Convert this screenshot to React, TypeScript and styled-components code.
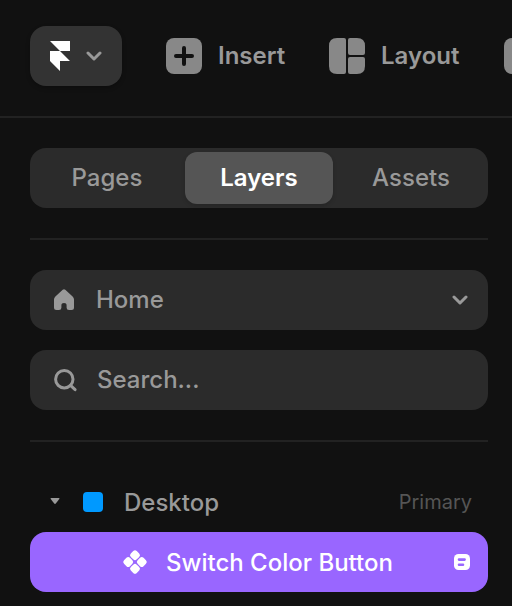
import React from "react";
import styled, { createGlobalStyle } from "styled-components";

const GlobalStyle = createGlobalStyle`
  * { box-sizing: border-box; }
  body { margin: 0; background: #111111; overflow: hidden; }
`;

const Panel = styled.div`
  width: 512px;
  height: 606px;
  overflow: hidden;
  background: #111111;
  color: #999999;
  font: 500 24px/30px Inter, sans-serif;
`;

const Toolbar = styled.header`
  display: flex;
  align-items: center;
  width: 512px;
  height: 118px;
  padding: 0 0 4px 30px;
  border-bottom: 2px solid #222222;
  overflow: hidden;
  svg { flex: none; display: block; }
`;

const MenuButton = styled.button`
  display: flex;
  align-items: center;
  flex: none;
  gap: 16px;
  width: 92px;
  height: 60px;
  margin: 0 44px 0 0;
  padding: 0 0 0 20px;
  border: 0;
  border-radius: 16px;
  background: #333333;
  box-shadow: 0 2px 4px rgba(0, 0, 0, 0.25);
`;

const Tool = styled.div<{ $width?: number }>`
  display: flex;
  align-items: center;
  flex: none;
  gap: 16px;
  width: ${(p) => p.$width ?? 36}px;
  color: #999999;
  font-weight: 600;
`;

const Label = styled.span`
  white-space: nowrap;
`;

const Sidebar = styled.main`
  width: 488px;
  padding: 30px 0 0 30px;
`;

const Tabs = styled.nav`
  display: grid;
  grid-template-columns: 146px 148px 146px;
  gap: 5px;
  height: 60px;
  padding: 4px;
  border-radius: 16px;
  background: #2b2b2b;
`;

const Tab = styled.div<{ $active?: boolean }>`
  display: flex;
  align-items: center;
  justify-content: center;
  border-radius: 12px;
  background: ${(p) => (p.$active ? "#555555" : "transparent")};
  color: ${(p) => (p.$active ? "#ffffff" : "#999999")};
  font-weight: ${(p) => (p.$active ? 600 : 500)};
  box-shadow: ${(p) => (p.$active ? "0 2px 4px rgba(0, 0, 0, 0.15)" : "none")};
`;

const Divider = styled.hr`
  height: 2px;
  margin: 30px 0;
  border: 0;
  background: #222222;
`;

const Field = styled.div<{ $gap?: number }>`
  display: flex;
  align-items: center;
  height: 60px;
  padding: 0 20px 0 22px;
  border-radius: 16px;
  background: #2b2b2b;
  & + & { margin-top: 20px; }
  svg { flex: none; }
  > span { margin-left: ${(p) => p.$gap ?? 18}px; flex: 1; }
`;

const LayerRow = styled.div<{ $selected?: boolean }>`
  display: flex;
  align-items: center;
  height: 60px;
  padding: ${(p) => (p.$selected ? "0 18px 0 92px" : "0 16px 0 20px")};
  border-radius: 16px;
  background: ${(p) => (p.$selected ? "#9966ff" : "transparent")};
  color: ${(p) => (p.$selected ? "#ffffff" : "#999999")};
  svg { flex: none; }
`;

const LayerName = styled(Label)<{ $indent?: number }>`
  flex: 1;
  padding: 2px 0 0 ${(p) => p.$indent ?? 0}px;
`;

const Swatch = styled.i`
  width: 20px;
  height: 20px;
  margin: 0 21px 0 23px;
  border-radius: 4px;
  background: #0099ff;
`;

const Hint = styled.span`
  color: #555555;
  font-size: 20px;
  font-weight: 400;
`;

const Chevron = () => (
  <svg width="16" height="12" viewBox="0 0 16 12" fill="none" stroke="#999999" strokeWidth="3" strokeLinecap="round" strokeLinejoin="round">
    <path d="M2 3 8 9l6-6" />
  </svg>
);

const FramerLogo = () => (
  <svg width="20" height="30" viewBox="0 0 20 30" fill="#ffffff">
    <path d="M0 0H20V10H10ZM0 10H10L20 20H10V30L0 20Z" />
  </svg>
);

const InsertIcon = () => (
  <svg width="36" height="36" viewBox="0 0 36 36">
    <rect width="36" height="36" rx="8" fill="#888888" />
    <path d="M10 18H26M18 10V26" stroke="#111111" strokeWidth="4" strokeLinecap="round" />
  </svg>
);

const LayoutIcon = () => (
  <svg width="36" height="36" viewBox="0 0 36 36" fill="#888888">
    <path d="M8 0H15Q17 0 17 2V34Q17 36 15 36H8Q0 36 0 28V8Q0 0 8 0Z" />
    <path d="M21 0H28Q36 0 36 8V15Q36 17 34 17H21Q19 17 19 15V2Q19 0 21 0Z" />
    <path d="M21 19H34Q36 19 36 21V28Q36 36 28 36H21Q19 36 19 34V21Q19 19 21 19Z" />
  </svg>
);

const NextToolIcon = () => (
  <svg width="36" height="36" viewBox="0 0 36 36" fill="#888888">
    <rect width="36" height="36" rx="8" />
  </svg>
);

const HomeIcon = () => (
  <svg width="26" height="26" viewBox="0 0 26 26" fill="#999999">
    <path d="M10.7 2.8Q12 1.6 13.3 2.8L20.6 9.4Q22 10.8 22 12.6V20.5Q22 23 19.5 23H17Q14.6 23 14.6 20.8V18.4Q14.6 16 12 16T9.4 18.4V20.8Q9.4 23 7 23H4.5Q2 23 2 20.5V12.6Q2 10.8 3.4 9.4Z" />
  </svg>
);

const SearchIcon = () => (
  <svg width="26" height="26" viewBox="0 0 26 26" fill="none" stroke="#999999" strokeWidth="3" strokeLinecap="round">
    <circle cx="12.3" cy="12.2" r="8.7" />
    <path d="m18.5 18.4 4.6 4.3" />
  </svg>
);

const Disclosure = () => (
  <svg width="10" height="8" viewBox="0 0 10 8" fill="#999999">
    <path d="M1.3 0H8.7Q10 0 9.3 1L5.8 5.5Q5 6.4 4.2 5.5L.7 1Q0 0 1.3 0Z" />
  </svg>
);

const ComponentIcon = () => (
  <svg width="26" height="26" viewBox="0 0 26 26" fill="#ffffff">
    {[[13, 6.2], [6.2, 13], [19.8, 13], [13, 19.8]].map(([x, y]) => (
      <rect key={`${x}-${y}`} x={x - 4.2} y={y - 4.2} width="8.4" height="8.4" rx="2.5" transform={`rotate(45 ${x} ${y})`} />
    ))}
  </svg>
);

const NoteIcon = () => (
  <svg width="16" height="16" viewBox="0 0 16 16">
    <rect width="16" height="16" rx="4.5" fill="#ffffff" />
    <path d="M5 5.6H10.6M5 10.8H9" stroke="#9966ff" strokeWidth="2.6" strokeLinecap="round" />
  </svg>
);

export default function App() {
  return (
    <Panel>
      <GlobalStyle />
      <Toolbar>
        <MenuButton aria-label="Menu">
          <FramerLogo />
          <Chevron />
        </MenuButton>
        <Tool $width={163}><InsertIcon /><Label>Insert</Label></Tool>
        <Tool $width={175}><LayoutIcon /><Label>Layout</Label></Tool>
        <Tool><NextToolIcon /></Tool>
      </Toolbar>
      <Sidebar>
        <Tabs>
          <Tab><Label>Pages</Label></Tab>
          <Tab $active><Label>Layers</Label></Tab>
          <Tab><Label>Assets</Label></Tab>
        </Tabs>
        <Divider />
        <Field><HomeIcon /><Label>Home</Label><Chevron /></Field>
        <Field $gap={19}><SearchIcon /><Label>Search...</Label></Field>
        <Divider />
        <LayerRow>
          <Disclosure />
          <Swatch />
          <LayerName>Desktop</LayerName>
          <Hint>Primary</Hint>
        </LayerRow>
        <LayerRow $selected>
          <ComponentIcon />
          <LayerName $indent={18}>Switch Color Button</LayerName>
          <NoteIcon />
        </LayerRow>
      </Sidebar>
    </Panel>
  );
}
